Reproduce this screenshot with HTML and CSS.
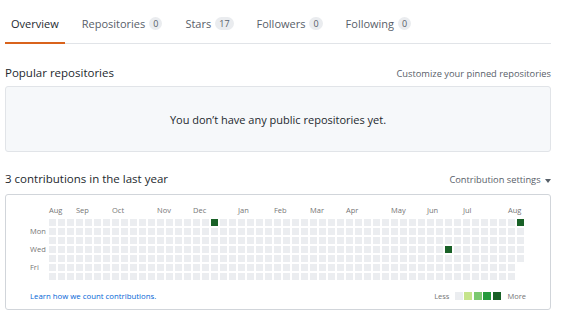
FILE: index.html
```html
<!DOCTYPE html>
<html lang="en">
<head>
    <meta charset="UTF-8">
    <meta name="viewport" content="width=device-width, initial-scale=1.0">
    <title>Overview</title>
    <link rel="stylesheet" href="styles.css">
</head>
<body>

    <div class="profile">
        <!-- Sekmeler -->
        <nav class="tabs">
            <a class="tab active" href="#">Overview</a>
            <a class="tab" href="#">Repositories <span class="counter">0</span></a>
            <a class="tab" href="#">Stars <span class="counter">17</span></a>
            <a class="tab" href="#">Followers <span class="counter">0</span></a>
            <a class="tab" href="#">Following <span class="counter">0</span></a>
        </nav>

        <!-- Popüler repolar -->
        <div class="section-head">
            <h2>Popular repositories</h2>
            <a class="muted-link" href="#">Customize your pinned repositories</a>
        </div>
        <div class="blankslate">
            You don’t have any public repositories yet.
        </div>

        <!-- Katkı grafiği -->
        <div class="section-head contrib-head">
            <h2>3 contributions in the last year</h2>
            <a class="muted-link" href="#">Contribution settings <span class="caret"></span></a>
        </div>
        <div class="graph-box">
            <div class="graph">
                <div class="days">
                    <span></span>
                    <span>Mon</span>
                    <span></span>
                    <span>Wed</span>
                    <span></span>
                    <span>Fri</span>
                    <span></span>
                </div>
                <div class="weeks-wrap">
                    <div class="months" id="months"></div>
                    <div class="cells" id="cells"></div>
                </div>
            </div>
            <div class="graph-foot">
                <a class="learn" href="#">Learn how we count contributions.</a>
                <div class="legend">
                    Less
                    <span class="day"></span>
                    <span class="day l1"></span>
                    <span class="day l2"></span>
                    <span class="day l3"></span>
                    <span class="day l4"></span>
                    More
                </div>
            </div>
        </div>
    </div>

    <script src="graph.js"></script>
</body>
</html>
```

FILE: styles.css
```css
* {
    margin: 0;
    padding: 0;
    box-sizing: border-box;
}

body {
    font-family: 'Open Sans', 'Noto Sans', sans-serif;
    background-color: #fff;
    color: #24292e;
}

a {
    text-decoration: none;
}

.profile {
    width: 546px;
    margin-left: 5px;
}

/* Sekmeler */
.tabs {
    display: flex;
    border-bottom: 1px solid #e1e4e8;
}

.tab {
    display: flex;
    align-items: center;
    gap: 4px;
    padding: 15px 6px 11px;
    margin-right: 11px;
    margin-bottom: -1px;
    height: 44px;
    font-size: 11px;
    color: #586069;
    border-bottom: 2px solid transparent;
}

.tab.active {
    color: #24292e;
    border-bottom-color: #d9631c;
}

.counter {
    display: inline-block;
    padding: 0 4px;
    font-size: 9px;
    line-height: 13px;
    color: #586069;
    background-color: #eaecef;
    border-radius: 7px;
}

/* Bölüm başlıkları */
.section-head {
    display: flex;
    justify-content: space-between;
    align-items: baseline;
    margin-top: 20px;
    margin-bottom: 4px;
}

.section-head h2 {
    font-size: 11.5px;
    font-weight: 400;
    line-height: 18px;
}

.muted-link {
    font-size: 9.3px;
    color: #586069;
}

.caret {
    display: inline-block;
    width: 0;
    height: 0;
    margin-left: 2px;
    vertical-align: middle;
    border-top: 4px solid #586069;
    border-left: 3px solid transparent;
    border-right: 3px solid transparent;
}

.blankslate {
    display: flex;
    justify-content: center;
    align-items: center;
    height: 66px;
    font-size: 11px;
    background-color: #f6f8fa;
    border: 1px solid #e1e4e8;
    border-radius: 3px;
}

.contrib-head {
    margin-top: 18px;
    margin-bottom: 6px;
}

/* Katkı grafiği */
.graph-box {
    height: 116px;
    padding: 10px 0 0 24px;
    border: 1px solid #d1d5da;
    border-radius: 3px;
}

.graph {
    display: flex;
    gap: 4px;
}

.days {
    display: grid;
    grid-template-rows: repeat(7, 7px);
    row-gap: 2px;
    margin-top: 14px;
    width: 15px;
    font-size: 7.5px;
    line-height: 7px;
    color: #767676;
}

.months,
.cells {
    display: grid;
    grid-template-columns: repeat(53, 7px);
    column-gap: 2px;
}

.months {
    height: 14px;
    font-size: 7.5px;
    line-height: 10px;
    color: #767676;
}

.months span {
    grid-row: 1;
    white-space: nowrap;
}

.cells {
    grid-template-rows: repeat(7, 7px);
    grid-auto-flow: column;
    row-gap: 2px;
}

.day {
    width: 7px;
    height: 7px;
    background-color: #ebedf0;
}

.day.l1 { background-color: #c6e48b; }
.day.l2 { background-color: #7bc96f; }
.day.l3 { background-color: #239a3b; }
.day.l4 { background-color: #196127; }

.graph-foot {
    display: flex;
    justify-content: space-between;
    align-items: center;
    margin-top: 11px;
    padding-right: 24px;
}

.learn {
    font-size: 7.8px;
    color: #0366d6;
}

.legend {
    display: flex;
    align-items: center;
    gap: 1.5px;
    font-size: 7.5px;
    color: #767676;
}

.legend .day {
    width: 8px;
    height: 8px;
}

.legend .day:first-of-type {
    margin-left: 4px;
}

.legend .day:last-of-type {
    margin-right: 5px;
}
```

FILE: graph.js
```js
// Ay etiketleri: hangi haftada başladıkları
const months = [
    ['Aug', 0], ['Sep', 3], ['Oct', 7], ['Nov', 12], ['Dec', 16],
    ['Jan', 21], ['Feb', 25], ['Mar', 29], ['Apr', 33], ['May', 38],
    ['Jun', 42], ['Jul', 46], ['Aug', 51]
];

const monthsEl = document.getElementById('months');
months.forEach(([name, week]) => {
    const span = document.createElement('span');
    span.textContent = name;
    span.style.gridColumn = week + 1;
    monthsEl.appendChild(span);
});

// Katkı günleri: [hafta, gün]
const contributions = ['18-0', '44-3', '52-0'];

const cellsEl = document.getElementById('cells');
for (let w = 0; w < 53; w++) {
    const days = w === 52 ? 5 : 7;
    for (let d = 0; d < days; d++) {
        const cell = document.createElement('span');
        cell.className = 'day';
        if (contributions.includes(w + '-' + d)) {
            cell.classList.add('l4');
        }
        cellsEl.appendChild(cell);
    }
}
```
